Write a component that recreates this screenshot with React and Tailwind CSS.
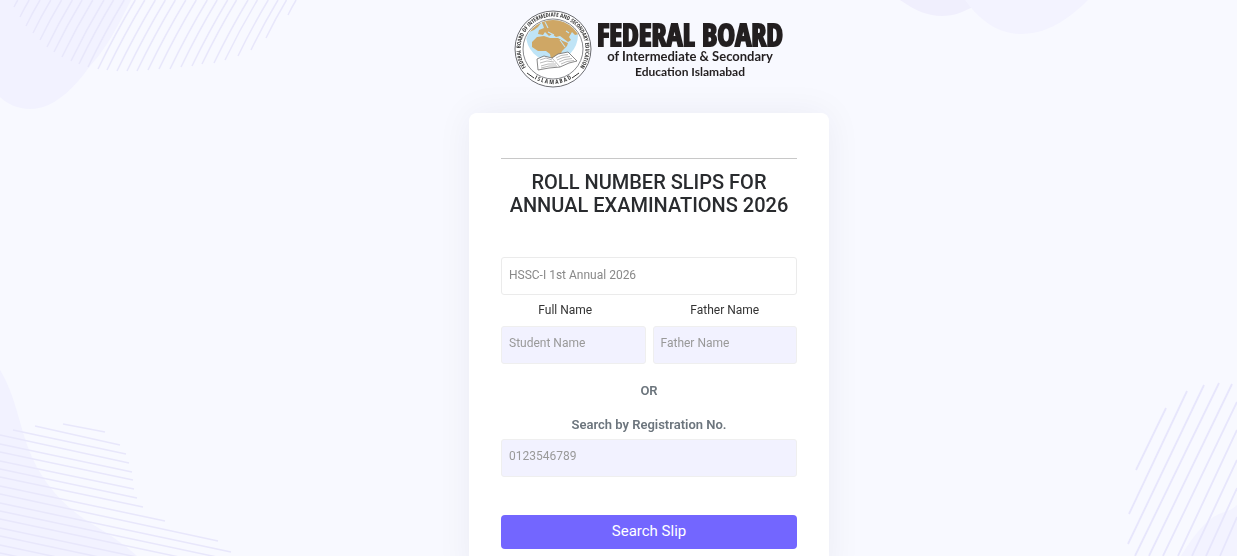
import { useState } from "react";

const topLeftLines = [
  [14, 7], [20, 17], [26, 26], [33, 33], [40, 40], [47, 47], [54, 52], [62, 57], [71, 61],
  [79, 64], [88, 67], [98, 69], [107, 70], [117, 71], [127, 71], [137, 71], [148, 70],
  [159, 69], [170, 69], [181, 67], [192, 66], [202, 64], [214, 63], [225, 60], [238, 56],
  [251, 50], [266, 38], [288, 15],
];

const bottomLeftLines = [
  [63, 74, 105, 82], [35, 76, 120, 95], [13, 80, 126, 104], [0, 85, 129, 113],
  [0, 94, 132, 122], [0, 102, 133, 130], [0, 111, 134, 139], [0, 119, 137, 148],
  [0, 127, 143, 157], [0, 136, 165, 171], [0, 144, 218, 191], [0, 153, 231, 202],
  [0, 161, 231, 210], [0, 169, 231, 218], [0, 178, 231, 227], [0, 186, 231, 235],
  [0, 195, 231, 244], [0, 203, 231, 252],
];

const bottomRightLines = [
  [66, 48, 36, 110], [87, 31, 29, 154], [104, 25, 28, 184], [119, 23, 35, 196],
  [132, 24, 49, 196], [137, 42, 63, 196], [137, 70, 78, 196], [137, 100, 92, 196],
  [137, 128, 106, 196], [137, 157, 120, 196],
];

function Background() {
  return (
    <div className="fixed inset-0 -z-10 overflow-hidden bg-[#f8f9ff]" aria-hidden="true">
      <svg className="absolute top-0 left-0" width="300" height="130" viewBox="0 0 300 130">
        <path d="M0 0H131C118 26 106 49 90 66C74 88 54 109 30 109C18 109 7 104 0 97Z" fill="#f2f2ff" />
        {topLeftLines.map(([x, y]) => (
          <path key={x} d={`M${x} ${y}Q${x + y * 0.24} ${y * 0.5} ${x + y * 0.54} 0`} fill="none" stroke="#e8e7fb" strokeWidth="1.5" />
        ))}
      </svg>

      <svg className="absolute top-0 left-[70%]" width="250" height="60" viewBox="6 0 250 60">
        <path d="M40 0C56 11 68 16 82 16C94 16 104 12 114 6V0Z" fill="#f0effd" />
        <path d="M105 0C118 18 136 34 161 34C186 34 208 20 228 0Z" fill="#f3f3ff" />
      </svg>

      <svg className="absolute bottom-0 left-0" width="260" height="206" viewBox="0 0 260 206">
        <path d="M0 20C17 48 19 78 32 107C48 143 74 164 97 177C112 186 126 196 137 206H0Z" fill="#f2f2ff" />
        {bottomLeftLines.map(([x1, y1, x2, y2]) => (
          <line key={y1} x1={x1} y1={y1} x2={x2} y2={y2} stroke="#e8e7fb" strokeWidth="1.5" />
        ))}
      </svg>

      <svg className="absolute right-0 bottom-0" width="137" height="196" viewBox="0 0 137 196">
        <path d="M81 196C93 177 105 160 119 154C127 151 132 150 137 145V196Z" fill="#f3f3ff" />
        {bottomRightLines.map(([x1, y1, x2, y2]) => (
          <line key={x2} x1={x1} y1={y1} x2={x2} y2={y2} stroke="#e7e6fc" strokeWidth="1.8" />
        ))}
      </svg>
    </div>
  );
}

function Logo() {
  return (
    <svg width="270" height="78" viewBox="0 0 270 78" role="img" aria-label="Federal Board of Intermediate and Secondary Education Islamabad">
      <defs>
        <path id="ringTop" d="M14.4 60.3A32.5 32.5 0 1 1 63.6 60.3" />
        <path id="ringBottom" d="M10 59A35.5 35.5 0 0 0 68 59" />
        <clipPath id="inner">
          <circle cx="39" cy="39" r="29" />
        </clipPath>
      </defs>
      {/* seal */}
      <circle cx="39" cy="39" r="38" fill="#fff" stroke="#6a6b70" strokeWidth="1" />
      <circle cx="39" cy="39" r="30" fill="#fff" stroke="#6a6b70" strokeWidth="0.8" />
      <g clipPath="url(#inner)">
        <circle cx="38" cy="25" r="26" fill="#bfe4f6" />
        <path d="M12 23L16 16L23 11L27 13L24 17L20 20L15 22Z" fill="#cfa765" />
        <path d="M27 11L36 9L53 9L60 16L65 24L61 25L58 22L55 27L57 30L54 32L50 29L46 26L42 27L38 24L35 26L31 22L29 25L24 24L25 20L30 18L29 15Z" fill="#cfa765" />
        <path d="M18 32L23 27L30 26L36 28L44 28L49 31L54 33L53 36L48 41L46 46L42 51L37 49L36 44L32 41L24 41L18 37Z" fill="#cfa765" />
        <path d="M46 30L51 37M34 22L40 25M31 12L34 18M52 21L55 23" fill="none" stroke="#bfe4f6" strokeWidth="1.1" />
      </g>
      {/* open book */}
      <path d="M23 49L30 46L38 48L44 44L54 42L63 51L55 53L46 57L35 58L24 60Z" fill="#fff" stroke="#6b6b6b" strokeWidth="0.8" />
      <path d="M38 48L46 57M26 50L32 48L38 50M26 53L33 51L40 52M27 56L34 54L42 54M27 58L35 56L43 56M42 48L47 45.5L54 44.5M43 50L49 47.5L56 46.5M45 52L51 49.5L58 48.5M47 54L53 51.5L60 50.5" fill="none" stroke="#8b8b8b" strokeWidth="0.6" />
      <path d="M13 63L20 68M65 63L58 68" stroke="#333" strokeWidth="1" />
      <g fill="#333" fontWeight="700" fontFamily="Liberation Sans Narrow, Open Sans Condensed, Roboto Condensed, sans-serif">
        <text fontSize="5.6">
          <textPath href="#ringTop" startOffset="50%" textAnchor="middle">
            FEDERAL BOARD OF INTERMEDIATE AND SECONDARY EDUCATION
          </textPath>
        </text>
        <text fontSize="6">
          <textPath href="#ringBottom" startOffset="50%" textAnchor="middle">
            I S L A M A B A D
          </textPath>
        </text>
      </g>
      <g fill="#231f20" textAnchor="middle" fontWeight="700">
        <text x="176" y="36" fontSize="30" stroke="#231f20" strokeWidth="1.8" fontFamily="Liberation Sans Narrow, Open Sans Condensed, Roboto Condensed, sans-serif">
          FEDERAL BOARD
        </text>
        <text x="176" y="51" fontSize="13" fontFamily="Lato, sans-serif">of Intermediate &amp; Secondary</text>
        <text x="176" y="66" fontSize="12" fontFamily="Lato, sans-serif">Education Islamabad</text>
      </g>
    </svg>
  );
}

const fieldClass =
  "h-[38px] w-full rounded-[3px] border border-[#efefef] bg-[#f2f2ff] px-[7px] pb-1 text-xs text-gray-700 outline-none placeholder:text-[#999]";

export default function App() {
  const [exam, setExam] = useState("hssc1");
  const [student, setStudent] = useState("");
  const [father, setFather] = useState("");
  const [regNo, setRegNo] = useState("");

  return (
    <div className="min-h-screen font-[Roboto,sans-serif]">
      <Background />
      <main className="flex flex-col items-center pt-[10px] md:pl-[61px]">
        <Logo />

        <form
          className="mt-[25px] w-full max-w-[360px] rounded-lg bg-white px-8 pt-[45px] pb-8 shadow-[0_0_36px_rgba(8,21,66,0.06)]"
          onSubmit={(e) => e.preventDefault()}
        >
          <hr className="border-[#c8c8c8]" />
          <h1 className="mt-3 text-center text-xl leading-[23px] font-medium text-[#292b2e]">
            ROLL NUMBER SLIPS FOR ANNUAL EXAMINATIONS 2026
          </h1>

          <select
            aria-label="Examination"
            className="mt-10 block h-[38px] w-full appearance-none rounded-[3px] border border-[#ebebeb] bg-white px-[7px] pb-[2px] text-xs text-[#898989] outline-none"
            value={exam}
            onChange={(e) => setExam(e.target.value)}
          >
            <option value="hssc1">HSSC-I 1st Annual 2026</option>
          </select>

          <div className="mt-[7px] grid grid-cols-2 gap-x-[7px] gap-y-2">
            <label htmlFor="student" className="pr-4 text-center text-xs text-[#333]">Full Name</label>
            <label htmlFor="father" className="text-center text-xs text-[#333]">Father Name</label>
            <input id="student" type="text" placeholder="Student Name" className={fieldClass}
              value={student} onChange={(e) => setStudent(e.target.value)} />
            <input id="father" type="text" placeholder="Father Name" className={fieldClass}
              value={father} onChange={(e) => setFather(e.target.value)} />
          </div>

          <p className="mt-4 text-center text-[13px] leading-[21px] font-semibold text-[#6c757d]">OR</p>
          <label htmlFor="regNo" className="mt-[13px] mb-1 block text-center text-[13px] leading-[21px] font-semibold text-[#6c757d]">
            Search by Registration No.
          </label>
          <input id="regNo" type="text" placeholder="0123546789" className={fieldClass}
            value={regNo} onChange={(e) => setRegNo(e.target.value)} />

          <button type="submit" className="mt-[38px] h-[34px] w-full cursor-pointer rounded bg-[#7366ff] pb-[2px] text-[15px] text-white hover:bg-[#5f51f5]">
            Search Slip
          </button>
        </form>
      </main>
    </div>
  );
}
